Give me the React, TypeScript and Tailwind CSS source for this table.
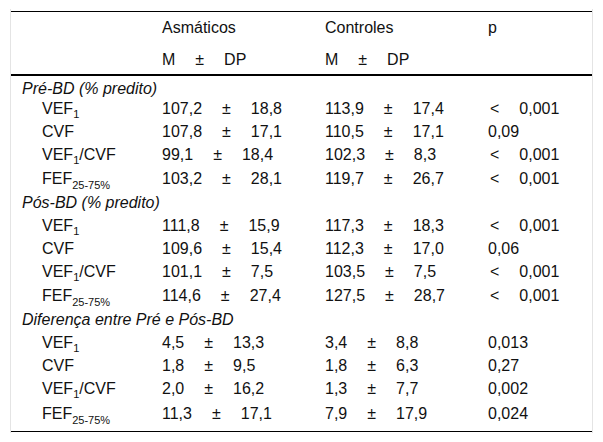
type Row =
  | { kind: "section"; title: string }
  | { kind: "data"; label: React.ReactNode; tall?: boolean; a: [string, string]; c: [string, string]; p: string };

const VEF1 = (
  <>
    VEF<sub className="text-[11px] relative top-[4px] align-baseline">1</sub>
  </>
);
const VEF1CVF = (
  <>
    VEF<sub className="text-[11px] relative top-[4px] align-baseline">1</sub>/CVF
  </>
);
const FEF = (
  <>
    FEF<sub className="text-[11px] relative top-[5px] align-baseline">25-75%</sub>
  </>
);

const rows: Row[] = [
  { kind: "section", title: "Pré-BD (% predito)" },
  { kind: "data", label: VEF1, a: ["107,2", "18,8"], c: ["113,9", "17,4"], p: "<0,001" },
  { kind: "data", label: "CVF", a: ["107,8", "17,1"], c: ["110,5", "17,1"], p: "0,09" },
  { kind: "data", label: VEF1CVF, a: ["99,1", "18,4"], c: ["102,3", "8,3"], p: "<0,001" },
  { kind: "data", label: FEF, tall: true, a: ["103,2", "28,1"], c: ["119,7", "26,7"], p: "<0,001" },
  { kind: "section", title: "Pós-BD (% predito)" },
  { kind: "data", label: VEF1, a: ["111,8", "15,9"], c: ["117,3", "18,3"], p: "<0,001" },
  { kind: "data", label: "CVF", a: ["109,6", "15,4"], c: ["112,3", "17,0"], p: "0,06" },
  { kind: "data", label: VEF1CVF, a: ["101,1", "7,5"], c: ["103,5", "7,5"], p: "<0,001" },
  { kind: "data", label: FEF, tall: true, a: ["114,6", "27,4"], c: ["127,5", "28,7"], p: "<0,001" },
  { kind: "section", title: "Diferença entre Pré e Pós-BD" },
  { kind: "data", label: VEF1, a: ["4,5", "13,3"], c: ["3,4", "8,8"], p: "0,013" },
  { kind: "data", label: "CVF", a: ["1,8", "9,5"], c: ["1,8", "6,3"], p: "0,27" },
  { kind: "data", label: VEF1CVF, a: ["2,0", "16,2"], c: ["1,3", "7,7"], p: "0,002" },
  { kind: "data", label: FEF, tall: true, a: ["11,3", "17,1"], c: ["7,9", "17,9"], p: "0,024" },
];

function MeanSd({ v }: { v: [string, string] }) {
  return (
    <>
      <span>{v[0]}</span>
      <span className="mx-5">±</span>
      <span>{v[1]}</span>
    </>
  );
}

function PValue({ p }: { p: string }) {
  if (p.startsWith("<")) {
    return (
      <>
        <span className="ml-[2px] mr-5">&lt;</span>
        <span>{p.slice(1)}</span>
      </>
    );
  }
  return <span>{p}</span>;
}

export default function App() {
  return (
    <div className="min-h-[442px] bg-white pt-[9px] pl-[10px] font-['Liberation_Sans',Arial,sans-serif] text-[16px] text-[#111]">
      <div className="w-[583px] border-x border-[#e4e4e4] pt-[2px] pb-[1px]">
        <table className="w-[581px] border-collapse table-fixed">
          <colgroup>
            <col className="w-[151px]" />
            <col className="w-[163px]" />
            <col className="w-[163px]" />
            <col />
          </colgroup>
          <thead>
            <tr className="border-t border-black h-[32px]">
              <th className="font-normal text-left p-0 align-middle" />
              <th className="font-normal text-left p-0 align-middle">Asmáticos</th>
              <th className="font-normal text-left p-0 align-middle">Controles</th>
              <th className="font-normal text-left p-0 align-middle">p</th>
            </tr>
            <tr className="border-b-2 border-black h-[31px]">
              <th className="p-0" />
              <th className="font-normal text-left p-0 align-middle pt-[2px]">
                M<span className="mx-5">±</span>DP
              </th>
              <th className="font-normal text-left p-0 align-middle pt-[2px]">
                M<span className="mx-5">±</span>DP
              </th>
              <th className="p-0" />
            </tr>
          </thead>
          <tbody className="border-b border-black">
            {rows.map((r, i) => {
              const last = i === rows.length - 1;
              const cell = `p-0 leading-[18px] whitespace-nowrap ${last ? "align-top pt-[4px]" : ""}`;
              return r.kind === "section" ? (
                <tr key={i} className="h-[23px]">
                  <td colSpan={4} className={`p-0 pl-[11px] italic leading-[18px] ${i === 0 ? "pt-[4px]" : ""}`}>
                    {r.title}
                  </td>
                </tr>
              ) : (
                <tr key={i} className={last ? "h-[31px]" : r.tall ? "h-[25px]" : "h-[23px]"}>
                  <td className={`${cell} pl-[31px]`}>{r.label}</td>
                  <td className={cell}>
                    <MeanSd v={r.a} />
                  </td>
                  <td className={cell}>
                    <MeanSd v={r.c} />
                  </td>
                  <td className={cell}>
                    <PValue p={r.p} />
                  </td>
                </tr>
              );
            })}
          </tbody>
        </table>
      </div>
    </div>
  );
}
